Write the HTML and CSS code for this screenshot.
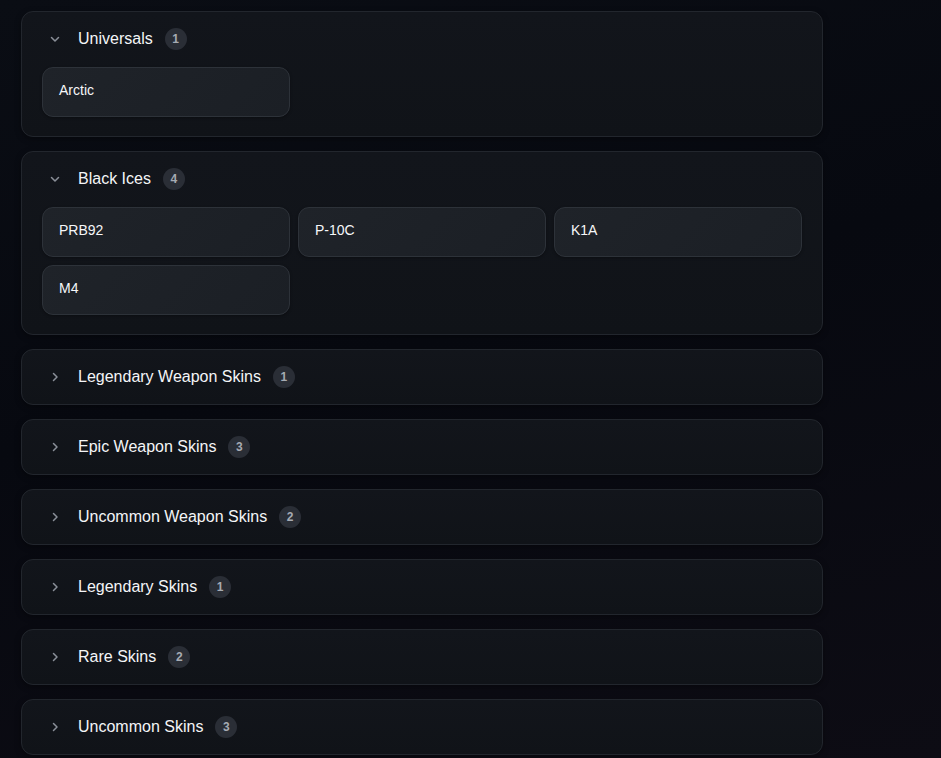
FILE: index.html
```html
<!DOCTYPE html>
<html>

<head>
    <meta charset="utf-8">
    <title>Collection</title>
    <meta name="viewport" content="width=device-width, initial-scale=1">
    <link rel="stylesheet" href="styles.css">
</head>

<body>
    <div class="groups">
        <!-- expanded -->
        <section class="group open">
            <div class="group-head">
                <svg class="chev" viewBox="0 0 14 14"><path d="M3.5 5.5 7 9l3.5-3.5" /></svg>
                <span class="group-title">Universals</span>
                <span class="count">1</span>
            </div>
            <div class="group-body">
                <div class="item">Arctic</div>
            </div>
        </section>

        <section class="group open">
            <div class="group-head">
                <svg class="chev" viewBox="0 0 14 14"><path d="M3.5 5.5 7 9l3.5-3.5" /></svg>
                <span class="group-title">Black Ices</span>
                <span class="count">4</span>
            </div>
            <div class="group-body">
                <div class="item">PRB92</div>
                <div class="item">P-10C</div>
                <div class="item">K1A</div>
                <div class="item">M4</div>
            </div>
        </section>

        <!-- collapsed -->
        <section class="group">
            <div class="group-head">
                <svg class="chev" viewBox="0 0 14 14"><path d="M5.5 3.5 9 7l-3.5 3.5" /></svg>
                <span class="group-title">Legendary Weapon Skins</span>
                <span class="count">1</span>
            </div>
        </section>

        <section class="group">
            <div class="group-head">
                <svg class="chev" viewBox="0 0 14 14"><path d="M5.5 3.5 9 7l-3.5 3.5" /></svg>
                <span class="group-title">Epic Weapon Skins</span>
                <span class="count">3</span>
            </div>
        </section>

        <section class="group">
            <div class="group-head">
                <svg class="chev" viewBox="0 0 14 14"><path d="M5.5 3.5 9 7l-3.5 3.5" /></svg>
                <span class="group-title">Uncommon Weapon Skins</span>
                <span class="count">2</span>
            </div>
        </section>

        <section class="group">
            <div class="group-head">
                <svg class="chev" viewBox="0 0 14 14"><path d="M5.5 3.5 9 7l-3.5 3.5" /></svg>
                <span class="group-title">Legendary Skins</span>
                <span class="count">1</span>
            </div>
        </section>

        <section class="group">
            <div class="group-head">
                <svg class="chev" viewBox="0 0 14 14"><path d="M5.5 3.5 9 7l-3.5 3.5" /></svg>
                <span class="group-title">Rare Skins</span>
                <span class="count">2</span>
            </div>
        </section>

        <section class="group">
            <div class="group-head">
                <svg class="chev" viewBox="0 0 14 14"><path d="M5.5 3.5 9 7l-3.5 3.5" /></svg>
                <span class="group-title">Uncommon Skins</span>
                <span class="count">3</span>
            </div>
        </section>
    </div>
</body>

</html>
```

FILE: styles.css
```css
* {
    margin: 0;
    padding: 0;
    box-sizing: border-box;
}

html,
body {
    height: 100%;
}

body {
    background: #080a10;
    background-image: linear-gradient(165deg, #0a0d14 0%, #070910 45%, #0d0c14 100%);
    font-family: "Liberation Sans", Arial, sans-serif;
    color: #f2f3f5;
    padding: 11px 21px;
    overflow: hidden;
}

.groups {
    width: 802px;
    display: flex;
    flex-direction: column;
    gap: 14px;
}

.group {
    background: #111419;
    background-image: linear-gradient(180deg, #12151b 0%, #101318 100%);
    border: 1px solid #22262d;
    border-radius: 12px;
    box-shadow: 0 2px 6px rgba(0, 0, 0, 0.35);
}

.group-head {
    height: 54px;
    display: flex;
    align-items: center;
    padding: 0 20px 0 26px;
}

.chev {
    width: 14px;
    height: 14px;
    fill: none;
    stroke: #8a8f98;
    stroke-width: 1.5;
    stroke-linecap: round;
    stroke-linejoin: round;
    margin-right: 16px;
}

.group-title {
    font-size: 16px;
    line-height: 20px;
    color: #f4f5f7;
}

.count {
    margin-left: 12px;
    width: 22px;
    height: 22px;
    border-radius: 50%;
    background: #2a2e36;
    color: #a6abb3;
    font-size: 12px;
    font-weight: 600;
    line-height: 22px;
    text-align: center;
}

.group-body {
    display: grid;
    grid-template-columns: repeat(3, 1fr);
    gap: 8px;
    padding: 1px 20px 19px;
}

.item {
    height: 50px;
    padding: 13px 16px;
    background: #1c2026;
    background-image: linear-gradient(135deg, #1f2329 0%, #1b1f25 100%);
    border: 1px solid #2d3239;
    border-radius: 11px;
    font-size: 14px;
    font-weight: 500;
    line-height: 18px;
    color: #f6f7f9;
    box-shadow: 0 1px 3px rgba(0, 0, 0, 0.3);
}
```
